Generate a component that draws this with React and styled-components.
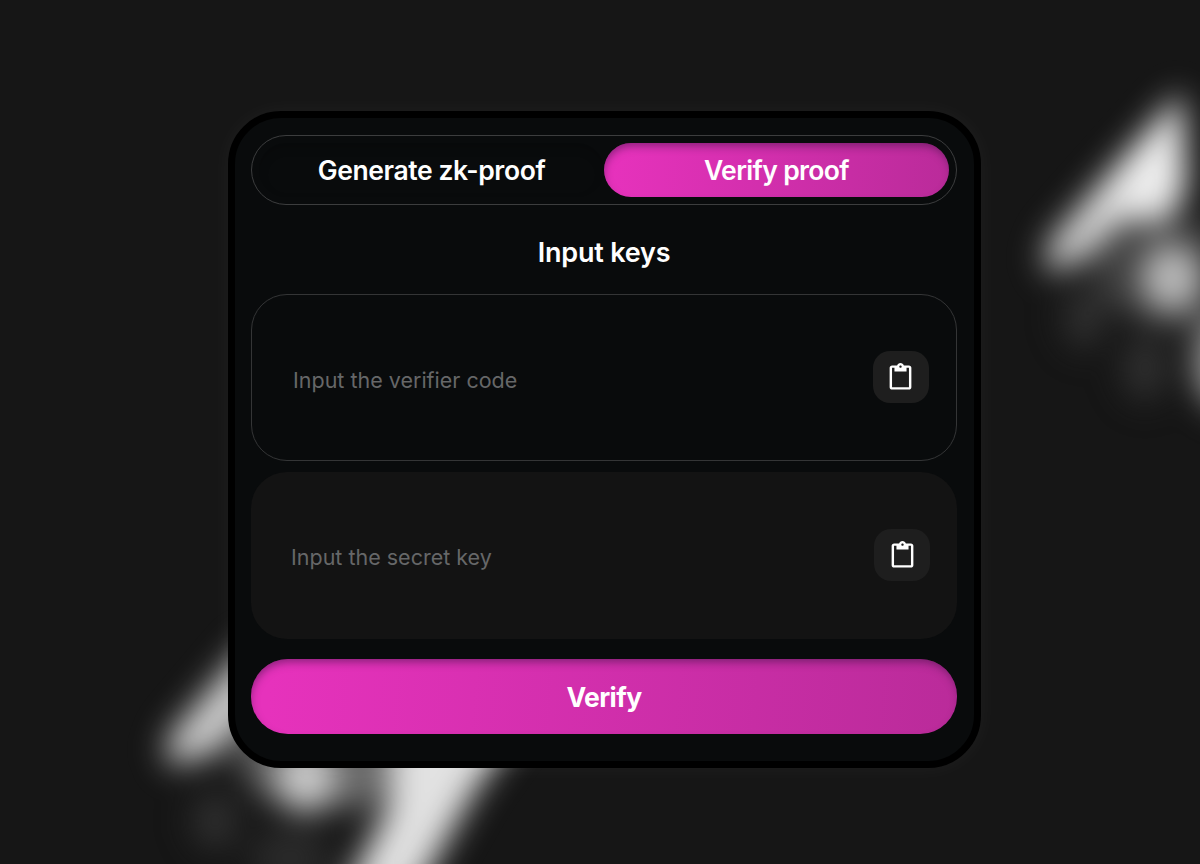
import React from 'react';
import styled, { createGlobalStyle, css } from 'styled-components';
import { MdContentPaste } from 'react-icons/md';

const GlobalStyle = createGlobalStyle`
  * { box-sizing: border-box; }
  body {
    margin: 0;
    background: #161616;
    font-family: Inter, "Liberation Sans", sans-serif;
    color: #fff;
    overflow: hidden;
  }
`;

const Page = styled.main`
  position: relative;
  width: 1200px;
  height: 864px;
  padding: 111px 0 0 228px;
  overflow: hidden;
  background: #161616;
`;

const Backdrop = styled.svg`
  position: absolute;
  inset: 0;
  width: 1200px;
  height: 864px;
`;

const Card = styled.section`
  position: relative;
  display: flex;
  flex-direction: column;
  width: 753px;
  height: 657px;
  padding: 17px 17px 0 16px;
  border: 7px solid #000;
  border-radius: 53px;
  background: #090b0c;
  box-shadow: 0 0 22px rgba(255, 255, 255, 0.045);
`;

const pink = css`
  background: linear-gradient(95deg, #e632bc 3%, #ba2b9a 100%);
  box-shadow: inset 1px 5px 8px -2px rgba(50, 15, 60, 0.5);
`;

const Tabs = styled.div`
  display: flex;
  flex: none;
  height: 70px;
  padding: 7px;
  border: 1px solid #3c3d3e;
  border-radius: 35px;
`;

const Tab = styled.button`
  flex: 1;
  padding: 1px 0 0;
  border: 0;
  border-radius: 27px;
  height: 54px;
  color: #fff;
  font: 600 26.5px/1 Inter, "Liberation Sans", sans-serif;
  letter-spacing: ${(p) => p.$spacing || '0'};
  background: transparent;
  box-shadow: inset 0 5px 10px rgba(0, 0, 0, 0.16);
  ${(p) => p.$active && pink}
`;

const Title = styled.h1`
  flex: none;
  height: 89px;
  margin: 0;
  padding-top: 3px;
  text-align: center;
  font-size: 27px;
  font-weight: 600;
  line-height: 90px;
  letter-spacing: -0.2px;
`;

const Field = styled.label`
  display: flex;
  flex: none;
  align-items: center;
  justify-content: space-between;
  height: 167px;
  padding: 0 ${(p) => (p.$filled ? '27px 1px 40px' : '27px 1px 41px')};
  border: ${(p) => (p.$filled ? '0' : '1px solid #343536')};
  border-radius: 36px;
  background: ${(p) => (p.$filled ? '#131313' : 'transparent')};
  & + & { margin-top: 11px; }
`;

const Input = styled.input`
  flex: 1;
  min-width: 0;
  padding: ${(p) => (p.$filled ? '4px' : '6px')} 0 0;
  border: 0;
  outline: 0;
  background: transparent;
  color: #fff;
  font: 400 21.5px/30px Inter, "Liberation Sans", sans-serif;
  &::placeholder { color: #666768; opacity: 1; }
`;

const PasteButton = styled.button`
  display: flex;
  flex: none;
  align-items: center;
  justify-content: center;
  width: 56px;
  height: 52px;
  padding: 0 ${(p) => (p.$filled ? '0' : '1px')} 0 0;
  border: 0;
  border-radius: 17px;
  background: #1e1e1e;
  color: #fff;
`;

const Submit = styled.button`
  flex: none;
  height: 75px;
  margin-top: 20px;
  padding: 2px 0 0;
  border: 0;
  border-radius: 37px;
  color: #fff;
  font: 700 26.5px/1 Inter, "Liberation Sans", sans-serif;
  letter-spacing: -0.6px;
  ${pink}
`;

const fields = [
  { label: 'Input the verifier code', filled: false },
  { label: 'Input the secret key', filled: true },
];

export default function App() {
  return (
    <Page>
      <GlobalStyle />
      <Backdrop viewBox="0 0 1200 864" aria-hidden="true">
        <defs>
          <filter id="soft" filterUnits="userSpaceOnUse" x="-100" y="-100" width="1500" height="1100" colorInterpolationFilters="sRGB">
            <feGaussianBlur stdDeviation="13" />
            <feGaussianBlur stdDeviation="10" />
          </filter>
          <linearGradient id="upper" gradientUnits="userSpaceOnUse" x1="1150" y1="190" x2="1070" y2="250">
            <stop offset="0" stopColor="#f0f0f0" />
            <stop offset="1" stopColor="#cacaca" />
          </linearGradient>
        </defs>
        <g filter="url(#soft)">
          <path fill="#404040" d="M1090 235 L1150 215 L1220 225 L1220 330 L1150 325 L1100 300 Z" />
          <path fill="url(#upper)" d="M1182 92 L1186 190 L1167 222 L1122 220 L1084 260 L1046 274 L1048 242 Z" />
          <ellipse cx="1172" cy="278" rx="31" ry="34" fill="#bababa" />
          <ellipse cx="1084" cy="318" rx="20" ry="30" fill="#303030" />
          <ellipse cx="1145" cy="368" rx="22" ry="32" fill="#303030" />
          <ellipse cx="1226" cy="362" rx="32" ry="48" fill="#999" />
          <path fill="#cecece" d="M255 635 L255 715 L212 755 L168 766 L168 738 Z" />
          <path fill="#6a6a6a" d="M228 745 L410 745 L370 810 L265 800 Z" />
          <ellipse cx="306" cy="778" rx="29" ry="35" fill="#ccc" />
          <path fill="#e2e2e2" d="M396 700 L532 710 L475 790 L412 900 L340 900 L386 812 Z" />
          <ellipse cx="215" cy="821" rx="22" ry="28" fill="#303030" />
          <ellipse cx="290" cy="858" rx="40" ry="30" fill="#2a2a2a" />
        </g>
      </Backdrop>
      <Card>
        <Tabs>
          <Tab $spacing="-0.4px">Generate zk-proof</Tab>
          <Tab $active $spacing="-0.65px">Verify proof</Tab>
        </Tabs>
        <Title>Input keys</Title>
        {fields.map((f) => (
          <Field key={f.label} $filled={f.filled}>
            <Input placeholder={f.label} $filled={f.filled} />
            <PasteButton type="button" aria-label="Paste" $filled={f.filled}>
              <MdContentPaste size={29} />
            </PasteButton>
          </Field>
        ))}
        <Submit>Verify</Submit>
      </Card>
    </Page>
  );
}
